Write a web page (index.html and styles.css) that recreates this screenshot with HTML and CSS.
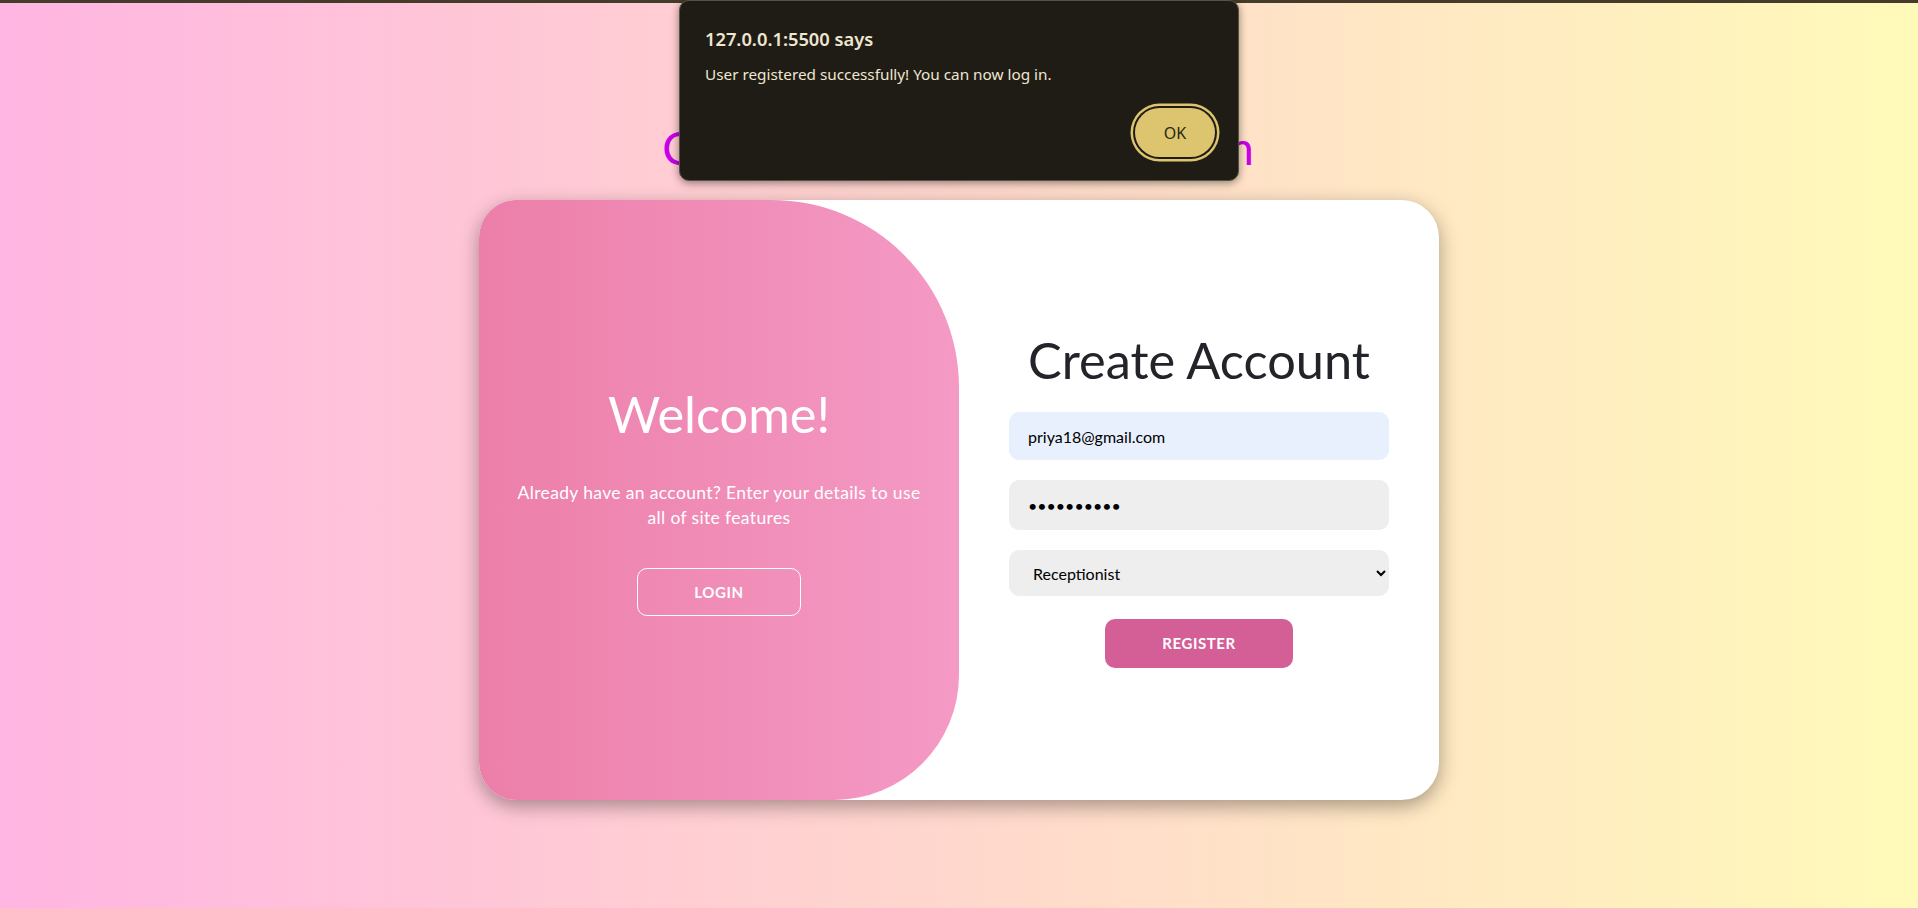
FILE: index.html
```html
<!DOCTYPE html>
<html lang="en">
<head>
<meta charset="utf-8">
<title>Clinic Management System</title>
<link rel="stylesheet" href="styles.css">
</head>
<body>
<div class="topbar"></div>
<main class="page">
  <h1 class="site-title">Clinic Management System</h1>
  <div class="card">
    <section class="welcome">
      <h2 class="panel-title light">Welcome!</h2>
      <p class="welcome-text">Already have an account? Enter your details to use all of site features</p>
      <button class="btn ghost" type="button">Login</button>
    </section>
    <form class="signup">
      <h2 class="panel-title dark">Create Account</h2>
      <input class="field autofill" type="email" value="priya18@gmail.com">
      <input class="field pw" type="password" value="priya@1234">
      <select class="field select">
        <option>Receptionist</option>
        <option>Doctor</option>
        <option>Admin</option>
      </select>
      <button class="btn solid" type="button">Register</button>
    </form>
  </div>
</main>

<div class="dialog" role="alertdialog">
  <div class="dialog-title">127.0.0.1:5500 says</div>
  <div class="dialog-msg">User registered successfully! You can now log in.</div>
  <div class="dialog-actions">
    <button class="dialog-ok" type="button">OK</button>
  </div>
</div>
</body>
</html>
```

FILE: styles.css
```css
* { box-sizing: border-box; }

html, body {
  margin: 0;
  padding: 0;
}

body {
  min-height: 908px;
  font-family: Lato, "Liberation Sans", sans-serif;
  background: linear-gradient(to right, #ffb5e1, #fffab9);
  position: relative;
  overflow: hidden;
}

.topbar {
  height: 3px;
  background: #443b2b;
}

.page {
  display: flex;
  flex-direction: column;
  align-items: center;
}

.site-title {
  margin: 117px 0 25px;
  font-size: 46px;
  line-height: 55px;
  font-weight: 400;
  letter-spacing: 2px;
  color: #c800e6;
}

.card {
  width: 960px;
  height: 600px;
  background: #fff;
  border-radius: 37.5px;
  box-shadow: 0 6px 19px rgba(0, 0, 0, 0.35);
  overflow: hidden;
  display: grid;
  grid-template-columns: 480px 480px;
}

.welcome {
  background: linear-gradient(to right, #ec7fa9, #f49ac5);
  border-radius: 0 187.5px 125px 0;
  display: flex;
  flex-direction: column;
  align-items: center;
  justify-content: center;
  padding: 0 37.5px;
  text-align: center;
  color: #fff;
}

.panel-title {
  margin: 0;
  font-size: 50.5px;
  line-height: 60.6px;
  font-weight: 400;
}

.panel-title.light {
  color: #fff;
  margin-bottom: 35px;
}

.panel-title.dark {
  color: #23242a;
  margin-bottom: 21px;
}

.welcome-text {
  margin: 0 0 37.8px;
  font-size: 17.5px;
  line-height: 25px;
  letter-spacing: 0.36px;
}

.btn {
  font-family: Lato, "Liberation Sans", sans-serif;
  font-size: 15px;
  font-weight: 700;
  letter-spacing: 0.6px;
  text-transform: uppercase;
  border-radius: 10px;
  padding: 0 56px;
  cursor: pointer;
}

.btn.ghost {
  height: 48px;
  background: transparent;
  border: 1px solid #fff;
  color: #fff;
}

.btn.solid {
  height: 49px;
  margin-top: 22.6px;
  background: #d45f97;
  border: 1px solid transparent;
  color: #fff;
}

.signup {
  display: flex;
  flex-direction: column;
  align-items: center;
  justify-content: center;
  padding: 0 50px 2px;
  margin: 0;
}

.field {
  width: 100%;
  border: none;
  outline: none;
  border-radius: 10px;
  background: #eee;
  font-family: Lato, "Liberation Sans", sans-serif;
  font-size: 16px;
  color: #000;
  padding: 0 19px;
  margin: 0;
}

.field + .field { margin-top: 20px; }

.field.autofill {
  height: 48px;
  background: #e8f0fe;
}

.field.pw {
  height: 50px;
}

.field.select {
  height: 46px;
  padding: 0 12px 0 20px;
}

/* JS alert dialog overlay */
.dialog {
  position: absolute;
  top: 0;
  left: 50%;
  margin-left: -280px;
  width: 560px;
  height: 181px;
  background: #1f1c15;
  border: 1px solid #575242;
  border-radius: 10px;
  box-shadow: 0 2px 8px rgba(0, 0, 0, 0.45);
  padding: 25px 23px 0 25px;
  font-family: "Noto Sans", "Open Sans", sans-serif;
  color: #efe6d0;
  display: flex;
  flex-direction: column;
}

.dialog-title {
  font-size: 18.3px;
  font-weight: 600;
  line-height: 25px;
}

.dialog-msg {
  margin-top: 13px;
  font-size: 15.3px;
  line-height: 21px;
}

.dialog-actions {
  display: flex;
  justify-content: flex-end;
  margin-top: auto;
  padding-bottom: 23px;
}

.dialog-ok {
  width: 80px;
  height: 49px;
  border: none;
  border-radius: 25px;
  background: #dcc56e;
  color: #2b2714;
  font-family: "Noto Sans", "Open Sans", sans-serif;
  font-size: 16px;
  box-shadow: 0 0 0 2px #1f1c15, 0 0 0 4.5px #dcc56e;
}
```
